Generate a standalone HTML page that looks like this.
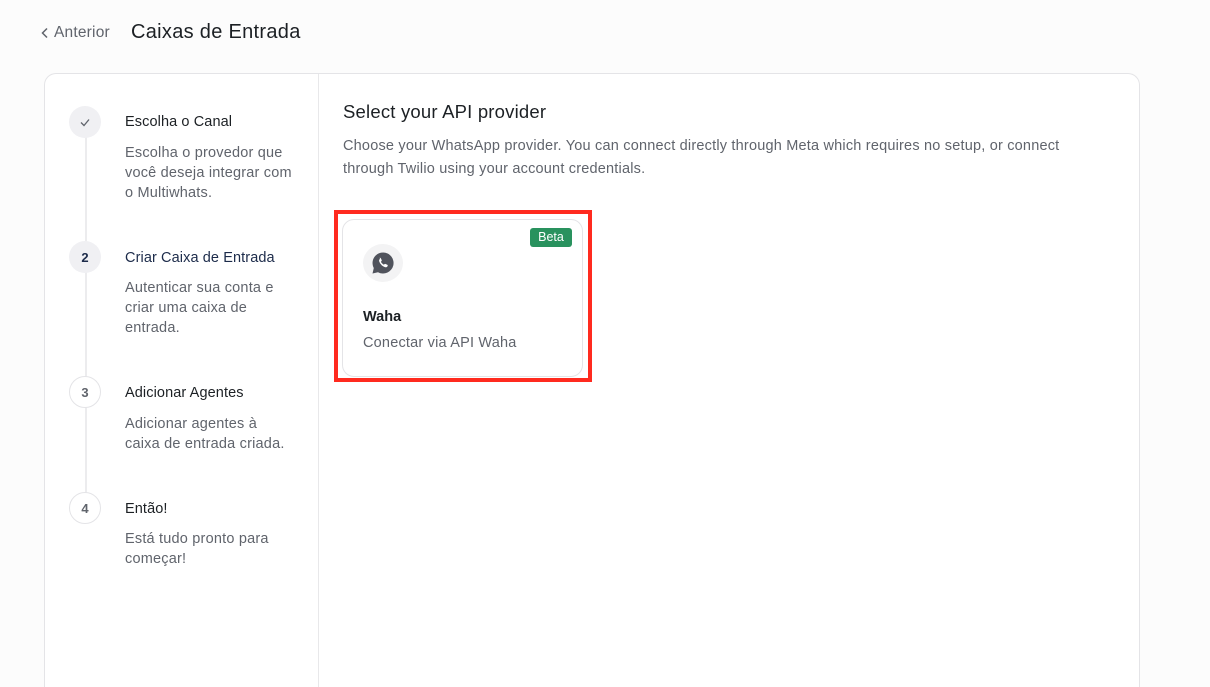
<!DOCTYPE html>
<html><head><meta charset="utf-8"><style>
*{box-sizing:border-box;margin:0;padding:0}
html,body{width:1210px;height:687px;overflow:hidden}
body{background:#fcfcfc;font-family:"Liberation Sans",sans-serif;color:#1c2024;position:relative}
.a{position:absolute;white-space:nowrap}
.back{left:54px;top:24px;font-size:15.5px;color:#60646c;letter-spacing:.2px}
.title{left:131px;top:21px;font-size:20px;color:#1c2024;letter-spacing:.3px}
.panel{left:44px;top:73px;width:1096px;height:614px;border:1px solid #e4e4e7;border-bottom:none;border-radius:12px 12px 0 0;background:#fff}
.div{left:318px;top:74px;width:1px;height:613px;background:#e8e8ea}
.line{left:85px;top:135px;width:2px;height:375px;background:#ececee}
.dot{width:32px;height:32px;border-radius:50%;background:#f0f0f3;font-size:13px;font-weight:bold;display:flex;align-items:center;justify-content:center;color:#1c2b4a}
.dot.o{background:#fff;border:1px solid #e4e4e7;color:#60646c}
.st{font-size:14.5px;color:#1c2024;letter-spacing:.1px}
.sd{font-size:14.5px;line-height:20px;color:#60646c;letter-spacing:.2px}
.h{left:343px;top:101px;font-size:18.5px;letter-spacing:.2px}
.p{left:343px;top:135px;font-size:14.5px;line-height:23px;color:#60646c;letter-spacing:.2px}
.red{left:334px;top:210px;width:258px;height:172px;border:4px solid #ff2a1f}
.card{left:342px;top:219px;width:241px;height:158px;border:1px solid #e4e4e7;border-radius:12px;background:#fff}
.beta{left:530px;top:228px;width:42px;height:19px;background:#29925e;color:#fff;border-radius:3px;font-size:12.5px;text-align:center;line-height:19px}
.ic{left:363px;top:244px;width:40px;height:38px;border-radius:50%;background:#f3f3f4;display:flex;align-items:center;justify-content:center}
</style></head><body>
<svg class="a" style="left:40px;top:27px" width="10" height="12" viewBox="0 0 10 12"><path d="M7 1.5L2.5 6 7 10.5" fill="none" stroke="#60646c" stroke-width="1.5"/></svg>
<div class="a back">Anterior</div>
<div class="a title">Caixas de Entrada</div>
<div class="a panel"></div>
<div class="a div"></div>
<div class="a line"></div>
<div class="a dot" style="left:69px;top:106px"><svg width="14" height="14" viewBox="0 0 14 14"><path d="M3 7.5l3 3 5-6" fill="none" stroke="#60646c" stroke-width="1.3"/></svg></div>
<div class="a st" style="left:125px;top:114px">Escolha o Canal</div>
<div class="a sd" style="left:125px;top:143px">Escolha o provedor que<br>você deseja integrar com<br>o Multiwhats.</div>
<div class="a dot" style="left:69px;top:241px">2</div>
<div class="a st" style="left:125px;top:250px;color:#1c2b4a">Criar Caixa de Entrada</div>
<div class="a sd" style="left:125px;top:278px">Autenticar sua conta e<br>criar uma caixa de<br>entrada.</div>
<div class="a dot o" style="left:69px;top:376px">3</div>
<div class="a st" style="left:125px;top:385px">Adicionar Agentes</div>
<div class="a sd" style="left:125px;top:414px">Adicionar agentes à<br>caixa de entrada criada.</div>
<div class="a dot o" style="left:69px;top:492px">4</div>
<div class="a st" style="left:125px;top:501px">Então!</div>
<div class="a sd" style="left:125px;top:529px">Está tudo pronto para<br>começar!</div>
<div class="a h">Select your API provider</div>
<div class="a p">Choose your WhatsApp provider. You can connect directly through Meta which requires no setup, or connect<br>through Twilio using your account credentials.</div>
<div class="a red"></div>
<div class="a card"></div>
<div class="a beta">Beta</div>
<div class="a ic"><svg width="24" height="24" viewBox="0 0 24 24"><path d="M12 1.5A10.5 10.5 0 0 0 2.8 17L1.5 22.5 7 21.2A10.5 10.5 0 1 0 12 1.5z" fill="#50535c"/><path d="M8.5 7c.5-.3 1-.3 1.3.3l.9 1.8c.2.4 0 .8-.3 1.1l-.5.5c.6 1.3 1.7 2.4 3 3l.5-.5c.3-.3.7-.4 1.1-.2l1.8.8c.5.3.6.8.3 1.3-.6 1-1.6 1.4-2.7 1-2.7-1-4.7-3-5.7-5.7-.3-1.1 0-2.1 1-2.7z" fill="#fff"/></svg></div>
<div class="a" style="left:363px;top:309px;font-size:14.5px;font-weight:bold">Waha</div>
<div class="a" style="left:363px;top:335px;font-size:14.5px;color:#60646c;letter-spacing:.2px">Conectar via API Waha</div>
</body></html>
